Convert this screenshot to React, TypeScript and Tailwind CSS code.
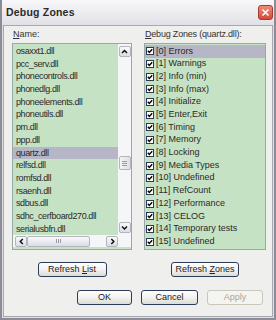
import React from "react";

const font = { fontFamily: '"Liberation Sans", Arial, sans-serif' };

const dlls = [
  "osaxxt1.dll",
  "pcc_serv.dll",
  "phonecontrols.dll",
  "phonedlg.dll",
  "phoneelements.dll",
  "phoneutils.dll",
  "pm.dll",
  "ppp.dll",
  "quartz.dll",
  "relfsd.dll",
  "romfsd.dll",
  "rsaenh.dll",
  "sdbus.dll",
  "sdhc_cerfboard270.dll",
  "serialusbfn.dll",
];

const zones = [
  "[0] Errors",
  "[1] Warnings",
  "[2] Info (min)",
  "[3] Info (max)",
  "[4] Initialize",
  "[5] Enter,Exit",
  "[6] Timing",
  "[7] Memory",
  "[8] Locking",
  "[9] Media Types",
  "[10] Undefined",
  "[11] RefCount",
  "[12] Performance",
  "[13] CELOG",
  "[14] Temporary tests",
  "[15] Undefined",
];

function Check() {
  return (
    <svg width="8" height="8" viewBox="0 0 8 8" className="shrink-0">
      <rect x="0.5" y="0.5" width="7" height="7" fill="#fff" stroke="#2a3a52" />
      <path d="M1.8 3.8 L3.3 5.4 L6.2 2.2" stroke="#000" strokeWidth="1.4" fill="none" />
    </svg>
  );
}

function Arrow({ dir }: { dir: "up" | "down" | "left" | "right" }) {
  const d =
    dir === "up"
      ? "M2 6 L4.5 3.5 L7 6"
      : dir === "down"
      ? "M2 3.5 L4.5 6 L7 3.5"
      : dir === "left"
      ? "M5.8 2 L3.3 4.5 L5.8 7"
      : "M3.3 2 L5.8 4.5 L3.3 7";
  return (
    <svg width="9" height="9" viewBox="0 0 9 9">
      <path d={d} stroke="#111" strokeWidth="1.5" fill="none" />
    </svg>
  );
}

function SbButton({ dir }: { dir: "up" | "down" | "left" | "right" }) {
  return (
    <div className="w-[12px] h-[11px] flex items-center justify-center rounded-[2px] border border-[#b4b4c0] bg-gradient-to-b from-[#fafafc] to-[#dcdce4]">
      <Arrow dir={dir} />
    </div>
  );
}

function Btn({
  children,
  w,
  disabled,
}: {
  children: React.ReactNode;
  w: string;
  disabled?: boolean;
}) {
  return (
    <div
      className={
        "h-[15px] flex items-center justify-center rounded-[3px] text-[9px] " +
        w +
        (disabled
          ? " border border-[#c9c7ba] bg-[#f4f4f0] text-[#a8a69a]"
          : " border border-[#2c3d5a] bg-gradient-to-b from-[#ffffff] via-[#f2f2f0] to-[#dcdcd6] text-[#222]")
      }
    >
      {children}
    </div>
  );
}

export default function App() {
  return (
    <div
      className="w-[276px] h-[320px] bg-[#dcdce2] border-l-[2px] border-r-[2px] border-b-[2px] border-[#8c8c96] flex flex-col overflow-hidden"
      style={font}
    >
      {/* Title bar */}
      <div className="h-[25px] shrink-0 flex items-center justify-between pl-[4px] pr-[1px] bg-gradient-to-b from-[#f8f8fa] to-[#e0e0e6]">
        <span className="text-[10.5px] font-bold text-[#2a2a2a] tracking-[0.2px]">Debug Zones</span>
        <div className="w-[15px] h-[15px] rounded-[3px] border border-[#a43a2a] bg-gradient-to-b from-[#f08a78] to-[#d2493a] flex items-center justify-center">
          <svg width="9" height="9" viewBox="0 0 9 9">
            <path d="M1.5 1.5 L7.5 7.5 M7.5 1.5 L1.5 7.5" stroke="#fff" strokeWidth="1.6" />
          </svg>
        </div>
      </div>

      {/* Body */}
      <div className="flex-1 mx-[1px] mb-[1px] border border-[#a8a8b0] bg-[#efefed] flex flex-col">
        <div className="flex gap-[12px] pl-[8px] pt-[1px]">
          {/* Left column */}
          <div className="w-[120px] flex flex-col">
            <div className="h-[16px] leading-[15px] text-[9px] text-[#333] pl-[1px]">
              <span className="underline">N</span>ame:
            </div>
            <div className="h-[207px] border border-[#9aa8a8] bg-[#c6e2c4] flex">
              <div className="flex-1 flex flex-col">
                <div className="flex-1 flex min-h-0">
                  <div className="flex-1 flex flex-col pt-[1px]">
                    {dlls.map((d) => (
                      <div
                        key={d}
                        className={
                          "h-[12.7px] leading-[12.7px] text-[9px] pl-[3px] whitespace-nowrap text-[#2a2a2a] tracking-[-0.4px] " +
                          (d === "quartz.dll" ? "bg-[#b6b6c6]" : "")
                        }
                      >
                        {d}
                      </div>
                    ))}
                  </div>
                  {/* vertical scrollbar */}
                  <div className="w-[13px] bg-[#f6f6f8] flex flex-col items-center justify-between py-[2px]">
                    <SbButton dir="up" />
                    <div className="flex-1 w-full flex flex-col items-center justify-end pb-[52px]">
                      <div className="w-[12px] h-[14px] rounded-[2px] border border-[#b4b4c0] bg-gradient-to-r from-[#f4f4f8] to-[#dedee6] flex flex-col items-center justify-center gap-[1px]">
                        <div className="w-[5px] h-[1px] bg-[#9a9aa8]" />
                        <div className="w-[5px] h-[1px] bg-[#9a9aa8]" />
                        <div className="w-[5px] h-[1px] bg-[#9a9aa8]" />
                      </div>
                    </div>
                    <SbButton dir="down" />
                  </div>
                </div>
                {/* horizontal scrollbar */}
                <div className="h-[12px] bg-[#f6f6f8] flex items-center pl-[2px] mb-[2px]">
                  <SbButton dir="left" />
                  <div className="w-[63px] h-[11px] rounded-[2px] border border-[#b4b4c0] bg-gradient-to-b from-[#fafafc] to-[#dcdce4] flex items-center justify-center gap-[1px]">
                    <div className="w-[1px] h-[4px] bg-[#9a9aa8]" />
                    <div className="w-[1px] h-[4px] bg-[#9a9aa8]" />
                    <div className="w-[1px] h-[4px] bg-[#9a9aa8]" />
                  </div>
                  <div className="flex-1" />
                  <SbButton dir="right" />
                  <div className="w-[13px]" />
                </div>
              </div>
            </div>
            <div className="flex justify-center mt-[12px]">
              <Btn w="w-[69px]">
                Refresh&nbsp;<span className="underline">L</span>ist
              </Btn>
            </div>
          </div>

          {/* Right column */}
          <div className="w-[122px] flex flex-col">
            <div className="h-[16px] leading-[15px] text-[9px] text-[#333] pl-[1px] tracking-[-0.2px]">
              <span className="underline">D</span>ebug Zones (quartz.dll):
            </div>
            <div className="h-[207px] border border-[#9aa8a8] bg-[#c6e2c4] flex flex-col pt-[1px]">
              {zones.map((z, i) => (
                <div
                  key={z}
                  className={
                    "h-[12.7px] flex items-center gap-[2px] pl-[1px] text-[9px] whitespace-nowrap text-[#2a2a2a] " +
                    (i === 0 ? "bg-[#b6b6c6]" : "")
                  }
                >
                  <Check />
                  <span>{z}</span>
                </div>
              ))}
            </div>
            <div className="flex justify-center mt-[12px]">
              <Btn w="w-[68px]">
                Refresh&nbsp;<span className="underline">Z</span>ones
              </Btn>
            </div>
          </div>
        </div>

        {/* bottom buttons */}
        <div className="flex gap-[9px] pl-[73px] mt-[13px]">
          <Btn w="w-[55px]">OK</Btn>
          <Btn w="w-[57px]">Cancel</Btn>
          <Btn w="w-[56px]" disabled>
            Apply
          </Btn>
        </div>
      </div>
    </div>
  );
}
